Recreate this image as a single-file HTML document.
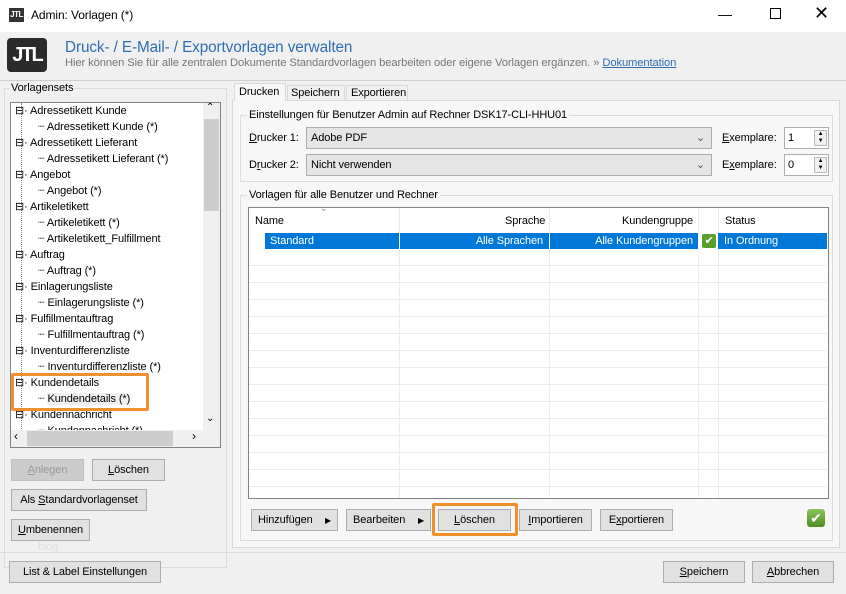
<!DOCTYPE html>
<html><head><meta charset="utf-8"><style>
*{box-sizing:border-box}
body{margin:0;width:846px;height:594px;background:#f0f0f0;font-family:"Liberation Sans",sans-serif;font-size:11px;color:#000;position:relative;overflow:hidden;letter-spacing:-0.1px}
.a{position:absolute}
.btn{position:absolute;background:#e1e1e1;border:1px solid #adadad;text-align:center;line-height:21px;font-size:11px}
.grp{position:absolute;border:1px solid #dcdcdc}
.lbl{position:absolute;background:#f0f0f0;padding:0 2px;top:-7px;left:6px}
.ti{position:absolute;white-space:nowrap;font-size:11px}
.combo{position:absolute;background:#e5e5e5;border:1px solid #adadad;height:22px;line-height:20px;padding-left:4px}
.spin{position:absolute;background:#fff;border:1px solid #adadad;height:22px;line-height:20px;padding-left:3px;width:45px}
u{text-decoration:underline}
.hl{position:absolute;border:1px solid #ececec;border-width:0 0 1px 0;left:249px;width:578px}
</style></head><body>
<div class="a" style="left:0;top:0;width:846px;height:32px;background:#fff"></div>
<div class="a" style="left:9px;top:8px;width:15px;height:14px;background:#333;color:#fff;font-size:8px;font-weight:bold;line-height:14px;text-align:center;letter-spacing:-0.5px">JTL</div>
<div class="a" style="left:31px;top:8px;font-size:12px">Admin: Vorlagen (*)</div>
<div class="a" style="left:718px;top:6px;font-size:14px">&#8212;</div>
<div class="a" style="left:770px;top:8px;width:11px;height:11px;border:1px solid #000"></div>
<div class="a" style="left:814px;top:3px;font-size:18px">&#10005;</div>
<div class="a" style="left:7px;top:38px;width:40px;height:34px;background:#2b2b2b;border-radius:4px;color:#fff;font-weight:bold;font-size:20px;line-height:34px;text-align:center;letter-spacing:-2px">JTL</div>
<div class="a" style="left:65px;top:39px;font-size:15.3px;color:#2f6fb0">Druck- / E-Mail- / Exportvorlagen verwalten</div>
<div class="a" style="left:65px;top:57px;font-size:11.2px;color:#777;letter-spacing:-0.1px">Hier können Sie für alle zentralen Dokumente Standardvorlagen bearbeiten oder eigene Vorlagen ergänzen. » <span style="color:#2f6fb0;text-decoration:underline">Dokumentation</span></div>
<div class="a" style="left:0;top:80px;width:846px;height:1px;background:#d0d0d0"></div>

<div class="grp" style="left:4px;top:88px;width:223px;height:480px"><span class="lbl" style="left:4px">Vorlagensets</span></div>
<div class="a" style="left:10px;top:102px;width:211px;height:346px;background:#fff;border:1px solid #828282"></div>
<div class="a" style="left:11px;top:103px;width:192px;height:327px;overflow:hidden">
<div style="position:absolute;left:10px;top:0;height:330px;border-left:1px dotted #888"></div>
<div class="ti" style="left:4px;top:1px">⊟· Adressetikett Kunde</div>
<div class="ti" style="left:27px;top:17px">┈ Adressetikett Kunde (*)</div>
<div class="ti" style="left:4px;top:33px">⊟· Adressetikett Lieferant</div>
<div class="ti" style="left:27px;top:49px">┈ Adressetikett Lieferant (*)</div>
<div class="ti" style="left:4px;top:65px">⊟· Angebot</div>
<div class="ti" style="left:27px;top:81px">┈ Angebot (*)</div>
<div class="ti" style="left:4px;top:97px">⊟· Artikeletikett</div>
<div class="ti" style="left:27px;top:113px">┈ Artikeletikett (*)</div>
<div class="ti" style="left:27px;top:129px">┈ Artikeletikett_Fulfillment</div>
<div class="ti" style="left:4px;top:145px">⊟· Auftrag</div>
<div class="ti" style="left:27px;top:161px">┈ Auftrag (*)</div>
<div class="ti" style="left:4px;top:177px">⊟· Einlagerungsliste</div>
<div class="ti" style="left:27px;top:193px">┈ Einlagerungsliste (*)</div>
<div class="ti" style="left:4px;top:209px">⊟· Fulfillmentauftrag</div>
<div class="ti" style="left:27px;top:225px">┈ Fulfillmentauftrag (*)</div>
<div class="ti" style="left:4px;top:241px">⊟· Inventurdifferenzliste</div>
<div class="ti" style="left:27px;top:257px">┈ Inventurdifferenzliste (*)</div>
<div class="ti" style="left:4px;top:273px">⊟· Kundendetails</div>
<div class="ti" style="left:27px;top:289px">┈ <span style="background:#f0f0f0">Kundendetails (*)</span></div>
<div class="ti" style="left:4px;top:305px">⊟· Kundennachricht</div>
<div class="ti" style="left:27px;top:321px">┈ Kundennachricht (*)</div>
</div>
<div class="a" style="left:203px;top:103px;width:17px;height:327px;background:#f0f0f0"></div>
<div class="a" style="left:204px;top:119px;width:15px;height:92px;background:#cdcdcd"></div>
<div class="a" style="left:206px;top:102px;font-size:10px">&#8963;</div>
<div class="a" style="left:206px;top:413px;font-size:10px">&#8964;</div>
<div class="a" style="left:11px;top:430px;width:209px;height:17px;background:#f0f0f0"></div>
<div class="a" style="left:27px;top:431px;width:146px;height:15px;background:#cdcdcd"></div>
<div class="a" style="left:14px;top:429px;font-size:12px">&#8249;</div>
<div class="a" style="left:192px;top:429px;font-size:12px">&#8250;</div>
<div class="a" style="left:11px;top:373px;width:138px;height:38px;border:3px solid #f0902c;border-radius:2px"></div>

<div class="btn" style="left:11px;top:459px;width:73px;height:22px;color:#9a9a9a;background:#ccc;border-color:#bfbfbf"><u>A</u>nlegen</div>
<div class="btn" style="left:92px;top:459px;width:73px;height:22px"><u>L</u>öschen</div>
<div class="btn" style="left:11px;top:489px;width:136px;height:22px">Als <u>S</u>tandardvorlagenset</div>
<div class="btn" style="left:11px;top:519px;width:79px;height:22px"><u>U</u>mbenennen</div>

<div class="a" style="left:232px;top:100px;width:608px;height:448px;border:1px solid #d9d9d9;background:#f7f7f7"></div>
<div class="a" style="left:234px;top:83px;width:52px;height:18px;background:#f7f7f7;border:1px solid #d9d9d9;border-bottom:none;padding:2px 4px">Drucken</div>
<div class="a" style="left:287px;top:85px;width:58px;height:15px;background:#f0f0f0;border:1px solid #d9d9d9;border-bottom:none;padding:1px 3px">Speichern</div>
<div class="a" style="left:346px;top:85px;width:62px;height:15px;background:#f0f0f0;border:1px solid #d9d9d9;border-bottom:none;padding:1px 4px">Exportieren</div>

<div class="grp" style="left:240px;top:115px;width:593px;height:67px"><span class="lbl" style="background:#f7f7f7">Einstellungen für Benutzer Admin auf Rechner DSK17-CLI-HHU01</span></div>
<div class="a" style="left:249px;top:132px"><u>D</u>rucker 1:</div>
<div class="combo" style="left:306px;top:127px;width:406px">Adobe PDF<span style="position:absolute;right:6px;color:#555">&#8964;</span></div>
<div class="a" style="left:722px;top:132px"><u>E</u>xemplare:</div>
<div class="spin" style="left:784px;top:127px">1<span style="position:absolute;right:1px;top:2px;width:13px;height:16px;border:1px solid #bbb;background:#f0f0f0;font-size:6px;line-height:7px;text-align:center">▲<br>▼</span></div>
<div class="a" style="left:249px;top:159px">D<u>r</u>ucker 2:</div>
<div class="combo" style="left:306px;top:154px;width:406px">Nicht verwenden<span style="position:absolute;right:6px;color:#555">&#8964;</span></div>
<div class="a" style="left:722px;top:159px">E<u>x</u>emplare:</div>
<div class="spin" style="left:784px;top:154px">0<span style="position:absolute;right:1px;top:2px;width:13px;height:16px;border:1px solid #bbb;background:#f0f0f0;font-size:6px;line-height:7px;text-align:center">▲<br>▼</span></div>

<div class="grp" style="left:240px;top:195px;width:593px;height:346px"><span class="lbl" style="background:#f7f7f7">Vorlagen für alle Benutzer und Rechner</span></div>
<div class="a" style="left:248px;top:207px;width:581px;height:292px;background:#fff;border:1px solid #828282"></div>
<div class="a" style="left:399px;top:208px;width:1px;height:290px;background:#ececec"></div>
<div class="a" style="left:549px;top:208px;width:1px;height:290px;background:#ececec"></div>
<div class="a" style="left:698px;top:208px;width:1px;height:290px;background:#ececec"></div>
<div class="a" style="left:718px;top:208px;width:1px;height:290px;background:#ececec"></div>
<div class="a" style="left:320px;top:203px;color:#888;font-size:9px">&#8964;</div>
<div class="a" style="left:255px;top:215px">Name</div>
<div class="a" style="left:505px;top:215px">Sprache</div>
<div class="a" style="left:622px;top:215px">Kundengruppe</div>
<div class="a" style="left:725px;top:215px">Status</div>
<div class="hl" style="top:249px;height:17px"></div>
<div class="hl" style="top:266px;height:17px"></div>
<div class="hl" style="top:283px;height:17px"></div>
<div class="hl" style="top:300px;height:17px"></div>
<div class="hl" style="top:317px;height:17px"></div>
<div class="hl" style="top:334px;height:17px"></div>
<div class="hl" style="top:351px;height:17px"></div>
<div class="hl" style="top:368px;height:17px"></div>
<div class="hl" style="top:385px;height:17px"></div>
<div class="hl" style="top:402px;height:17px"></div>
<div class="hl" style="top:419px;height:17px"></div>
<div class="hl" style="top:436px;height:17px"></div>
<div class="hl" style="top:453px;height:17px"></div>
<div class="hl" style="top:470px;height:17px"></div>
<div class="a" style="left:265px;top:233px;width:562px;height:16px;background:#0078d7;color:#fff;line-height:16px">
<span class="a" style="left:5px">Standard</span>
<span class="a" style="left:134px;width:1px;height:16px;background:#fff"></span>
<span class="a" style="right:284px">Alle Sprachen</span>
<span class="a" style="left:284px;width:1px;height:16px;background:#fff"></span>
<span class="a" style="right:134px">Alle Kundengruppen</span>
<span class="a" style="left:433px;width:20px;height:16px;background:#fff"></span>
<span class="a" style="left:437px;top:1px;width:14px;height:14px;background:#5a9e2e;border-radius:2px;font-size:11px;line-height:14px;text-align:center;color:#fff">✔</span>
<span class="a" style="left:459px">In Ordnung</span>
</div>

<div class="btn" style="left:251px;top:509px;width:87px;height:22px;text-align:left;padding-left:6px">Hinzufügen<span style="position:absolute;right:6px;font-size:8px">▶</span></div>
<div class="btn" style="left:346px;top:509px;width:85px;height:22px;text-align:left;padding-left:6px">Bearbeiten<span style="position:absolute;right:6px;font-size:8px">▶</span></div>
<div class="btn" style="left:438px;top:509px;width:73px;height:22px"><u>L</u>öschen</div>
<div class="a" style="left:432px;top:503px;width:86px;height:33px;border:3px solid #f0902c;border-radius:2px"></div>
<div class="btn" style="left:519px;top:509px;width:73px;height:22px"><u>I</u>mportieren</div>
<div class="btn" style="left:600px;top:509px;width:73px;height:22px">E<u>x</u>portieren</div>
<div class="a" style="left:807px;top:509px;width:18px;height:18px;background:linear-gradient(#8cc45a,#4e8e24);border-radius:3px;color:#fff;font-size:14px;line-height:18px;text-align:center">✔</div>

<div class="a" style="left:0;top:552px;width:846px;height:1px;background:#dcdcdc"></div>
<div class="a" style="left:38px;top:541px;color:#ddd;font-size:11px">blog</div>
<div class="btn" style="left:9px;top:561px;width:152px;height:22px">List &amp; Label Einstellungen</div>
<div class="btn" style="left:663px;top:561px;width:82px;height:22px"><u>S</u>peichern</div>
<div class="btn" style="left:752px;top:561px;width:82px;height:22px"><u>A</u>bbrechen</div>
</body></html>
